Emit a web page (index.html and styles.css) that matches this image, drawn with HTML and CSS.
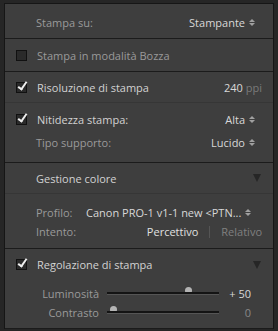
FILE: index.html
```html
<html>
<head>
    <meta charset="UTF-8">
    <link rel="stylesheet" href="styles.css">
</head>
<body>
    <div class="panel">
        <div class="section">
            <div class="row first">
                <span class="label">Stampa su:</span>
                <span class="value">Stampante<i class="updown"></i></span>
            </div>
        </div>
        <div class="section">
            <div class="row check">
                <span class="box"></span>
                <span class="label">Stampa in modalità Bozza</span>
            </div>
        </div>
        <div class="section">
            <div class="row check short-row">
                <span class="box checked"></span>
                <span class="text">Risoluzione di stampa</span>
                <span class="value plain">240 <span class="unit">ppi</span></span>
            </div>
            <div class="group sharpen">
                <div class="row check sub">
                    <span class="box checked"></span>
                    <span class="text">Nitidezza stampa:</span>
                    <span class="value">Alta<i class="updown"></i></span>
                </div>
                <div class="row sub">
                    <span class="label">Tipo supporto:</span>
                    <span class="value">Lucido<i class="updown"></i></span>
                </div>
            </div>
        </div>
        <div class="section">
            <div class="row header">
                <span class="text">Gestione colore</span>
                <i class="tri"></i>
            </div>
            <div class="group color">
                <div class="row sub">
                    <span class="label short">Profilo:</span>
                    <span class="value">Canon PRO-1 v1-1 new &lt;PTN...<i class="updown"></i></span>
                </div>
                <div class="row sub">
                    <span class="label">Intento:</span>
                    <span class="choice">
                        <span class="on">Percettivo</span>
                        <span class="bar"></span>
                        <span class="off">Relativo</span>
                    </span>
                </div>
            </div>
        </div>
        <div class="section">
            <div class="row check header tall">
                <span class="box checked"></span>
                <span class="text">Regolazione di stampa</span>
                <i class="tri"></i>
            </div>
            <div class="sliders">
                <div class="slider-row">
                    <span class="slabel">Luminosità</span>
                    <span class="track"><i class="thumb" style="left: 73%"></i></span>
                    <span class="num">+ 50</span>
                </div>
                <div class="slider-row">
                    <span class="slabel">Contrasto</span>
                    <span class="track"><i class="thumb" style="left: 6%"></i></span>
                    <span class="num dim">0</span>
                </div>
            </div>
        </div>
    </div>
</body>
</html>
```

FILE: styles.css
```css
body {
    margin: 0;
    width: 278px;
    height: 331px;
    overflow: hidden;
    background: #262626;
    font-family: "Open Sans", "DejaVu Sans", sans-serif;
    font-size: 11px;
    color: #a8a8a8;
    white-space: nowrap;
}

.panel {
    margin: 3px 0 0 4px;
    width: 268px;
    border: 1px solid #161616;
    border-bottom: none;
    background: #3e3e3e;
}

.section {
    border-bottom: 1px solid #1b1b1b;
}

.row {
    display: flex;
    align-items: center;
    height: 31px;
    padding: 0 11px 0 31px;
}

.row.first {
    height: 31px;
    padding-top: 3px;
    padding-right: 18px;
}

.row.check {
    padding-left: 11px;
    height: 32px;
}

.row.short-row {
    height: 30px;
}

.row.sub {
    height: 23px;
    padding-right: 18px;
}

.row.header {
    height: 30px;
    padding-right: 12px;
}

.row.tall {
    height: 31px;
}

.group {
    border-top: 1px solid #363636;
}

.group.sharpen {
    padding: 5px 0 8px;
}

.group.color {
    padding: 9px 0 7px;
}

.group.color .row.sub {
    height: 19px;
}

.label {
    color: #9a9a9a;
    flex: 1;
}

.label.short {
    flex: none;
    width: 50px;
}

.text {
    color: #d2d2d2;
    flex: 1;
}

.value {
    color: #d8d8d8;
    display: flex;
    align-items: center;
}

.value.plain {
    display: block;
}

.unit {
    color: #7a7a7a;
}

.box {
    width: 9px;
    height: 9px;
    background: #2a2a2a;
    border: 1px solid #111;
    margin-right: 10px;
    position: relative;
}

.box.checked::after {
    content: "";
    position: absolute;
    left: 3px;
    top: -3px;
    width: 3px;
    height: 8px;
    border-right: 2px solid #eee;
    border-bottom: 2px solid #eee;
    transform: rotate(35deg);
}

.updown {
    display: inline-flex;
    flex-direction: column;
    margin-left: 4px;
    gap: 1px;
}

.updown::before,
.updown::after {
    content: "";
    border-left: 3px solid transparent;
    border-right: 3px solid transparent;
}

.updown::before {
    border-bottom: 3px solid #a0a0a0;
}

.updown::after {
    border-top: 3px solid #a0a0a0;
}

.tri {
    border-left: 4px solid transparent;
    border-right: 4px solid transparent;
    border-top: 8px solid #262626;
}

.choice {
    display: flex;
    align-items: center;
    margin-left: auto;
    margin-right: -7px;
}

.on {
    color: #e0e0e0;
}

.bar {
    width: 1px;
    height: 12px;
    background: #555;
    margin: 0 11px;
}

.off {
    color: #808080;
}

.sliders {
    padding: 4px 0 6px;
}

.slider-row {
    display: flex;
    align-items: center;
    height: 19px;
}

.slabel {
    width: 102px;
    text-align: right;
    color: #9a9a9a;
    padding-right: 8px;
    box-sizing: border-box;
}

.track {
    width: 112px;
    height: 2px;
    background: #141414;
    border-bottom: 1px solid #555;
    position: relative;
}

.thumb {
    position: absolute;
    top: -5px;
    width: 7px;
    height: 5px;
    margin-left: -4px;
    background: #b4b4b4;
    border-radius: 4px 4px 1px 1px;
}

.num {
    width: 32px;
    text-align: right;
    color: #d8d8d8;
}

.num.dim {
    color: #888;
}
```
